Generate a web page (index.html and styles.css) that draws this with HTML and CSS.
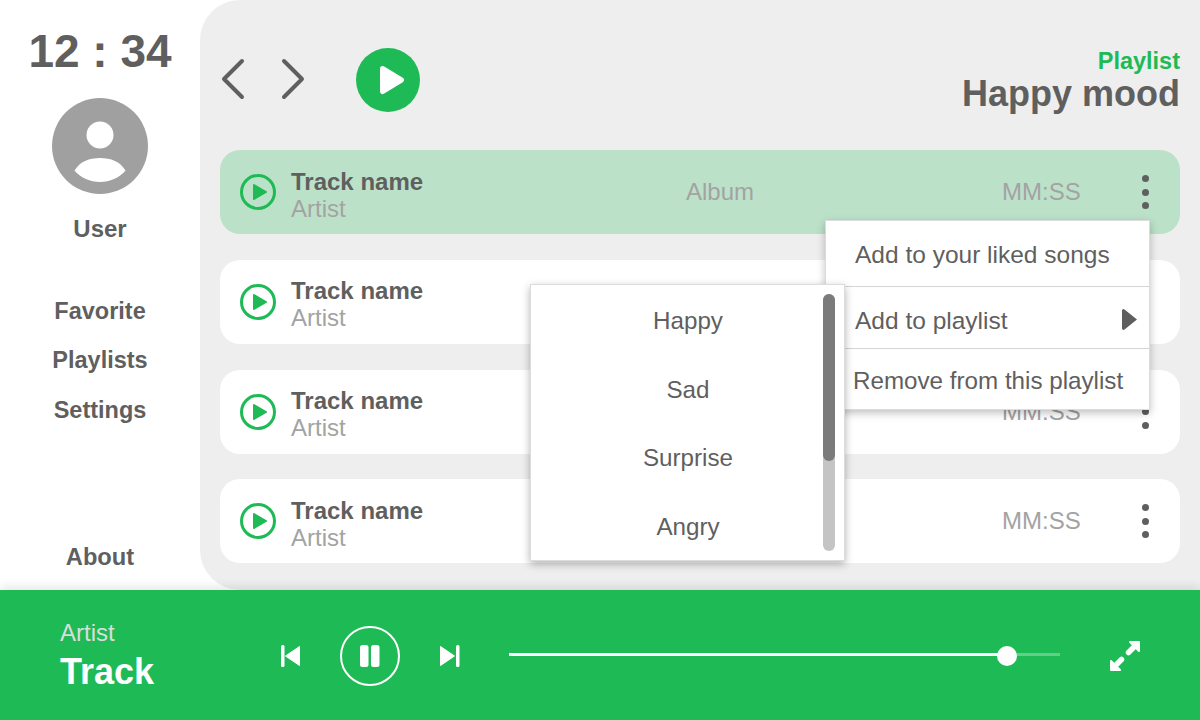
FILE: index.html
```html
<!DOCTYPE html>
<html lang="en">
<head>
  <meta charset="UTF-8">
  <title>Happy mood</title>
  <link rel="stylesheet" href="styles.css">
</head>
<body>
  <div class="top">
    <!-- Sidebar -->
    <nav class="sidebar">
      <div class="clock">12 : 34</div>
      <svg class="avatar" viewBox="0 0 96 96">
        <circle cx="48" cy="48" r="48" fill="#a0a0a0"/>
        <circle cx="48" cy="37" r="13.5" fill="#fff"/>
        <path d="M22.5 72.5C28 63.5 37 60 48 60s20 3.5 25.5 12.5C67 80 58 84 48 84s-19-4-25.5-11.5z" fill="#fff"/>
      </svg>
      <div class="user">User</div>
      <div class="links">
        <a>Favorite</a>
        <a>Playlists</a>
        <a>Settings</a>
      </div>
      <a class="about">About</a>
    </nav>

    <!-- Playlist panel -->
    <main class="panel">
      <header class="head">
        <svg class="arrow" viewBox="0 0 26 42"><path d="M22 3L4 21l18 18" /></svg>
        <svg class="arrow next" viewBox="0 0 26 42"><path d="M4 3l18 18L4 39" /></svg>
        <svg class="play-big" viewBox="0 0 64 64">
          <circle cx="32" cy="32" r="32" fill="#1eba55"/>
          <path d="M26.5 20.5L45.5 32 26.5 43.5z" fill="#fff" stroke="#fff" stroke-width="5" stroke-linejoin="round"/>
        </svg>
        <div class="title">
          <div class="label">Playlist</div>
          <h1>Happy mood</h1>
        </div>
      </header>

      <div class="tracks">
        <div class="track active">
          <svg class="play" viewBox="0 0 36 36"><circle cx="18" cy="18" r="16.5"/><path d="M14 11l12 7-12 7z"/></svg>
          <div class="names"><b>Track name</b><span>Artist</span></div>
          <div class="album">Album</div>
          <div class="time">MM:SS</div>
          <div class="dots"><i></i><i></i><i></i></div>
        </div>
        <div class="track">
          <svg class="play" viewBox="0 0 36 36"><circle cx="18" cy="18" r="16.5"/><path d="M14 11l12 7-12 7z"/></svg>
          <div class="names"><b>Track name</b><span>Artist</span></div>
          <div class="album">Album</div>
          <div class="time">MM:SS</div>
          <div class="dots"><i></i><i></i><i></i></div>
        </div>
        <div class="track">
          <svg class="play" viewBox="0 0 36 36"><circle cx="18" cy="18" r="16.5"/><path d="M14 11l12 7-12 7z"/></svg>
          <div class="names"><b>Track name</b><span>Artist</span></div>
          <div class="album">Album</div>
          <div class="time">MM:SS</div>
          <div class="dots"><i></i><i></i><i></i></div>
        </div>
        <div class="track">
          <svg class="play" viewBox="0 0 36 36"><circle cx="18" cy="18" r="16.5"/><path d="M14 11l12 7-12 7z"/></svg>
          <div class="names"><b>Track name</b><span>Artist</span></div>
          <div class="album">Album</div>
          <div class="time">MM:SS</div>
          <div class="dots"><i></i><i></i><i></i></div>
        </div>
      </div>
    </main>
  </div>

  <!-- Player -->
  <footer class="player">
    <div class="now">
      <span>Artist</span>
      <b>Track</b>
    </div>
    <svg class="skip" viewBox="0 0 20 24"><rect x="1" y="1" width="3.5" height="22" rx="1.5"/><path class="skip-tri" d="M19.5 2.5v19L5.500 12z"/></svg>
    <svg class="pause" viewBox="0 0 60 60">
      <circle cx="30" cy="30" r="29" fill="none" stroke="#fff" stroke-width="2"/>
      <rect x="20" y="19" width="8.5" height="22" rx="2.5" fill="#fff"/>
      <rect x="31" y="19" width="8.5" height="22" rx="2.5" fill="#fff"/>
    </svg>
    <svg class="skip" viewBox="0 0 20 24"><rect x="16" y="1" width="3.5" height="22" rx="1.5"/><path class="skip-tri" d="M.5 2.5v19L14.500 12z"/></svg>
    <div class="progress">
      <div class="knob"></div>
    </div>
    <svg class="expand" viewBox="0 0 30 30">
      <path class="expand-head" d="M20 1h9v9zM10 29H1v-9z"/>
      <path class="expand-shaft" d="M24 6l-5.500 5.500M6 24l5.500-5.500"/>
    </svg>
  </footer>

  <!-- Context menus -->
  <div class="menu">
    <div class="menu-item">Add to your liked songs</div>
    <div class="menu-item sub">Add to playlist<svg class="caret" viewBox="0 0 15 23"><path d="M0 2.5v18a1.5 1.5 0 0 0 2.5 1.100L15 11.5 2.500 1.400A1.500 1.500 0 0 0 0 2.500z"/></svg></div>
    <div class="menu-item last">Remove from this playlist</div>
  </div>
  <div class="picker">
    <div class="moods">
      <div>Happy</div>
      <div>Sad</div>
      <div>Surprise</div>
      <div>Angry</div>
    </div>
    <div class="scroll"><div class="thumb"></div></div>
  </div>
</body>
</html>
```

FILE: styles.css
```css
* { box-sizing: border-box; }
html, body { margin: 0; height: 100%; }
body {
  position: relative;
  display: flex;
  flex-direction: column;
  width: 1200px;
  height: 720px;
  overflow: hidden;
  background: #fff;
  color: #5f5f5f;
  font-family: "Liberation Sans", Arial, sans-serif;
}
.top { display: flex; height: 590px; }

/* sidebar */
.sidebar {
  display: flex;
  flex-direction: column;
  align-items: center;
  width: 200px;
  font-weight: bold;
}
.clock { margin-top: 25px; font-size: 46px; line-height: 53px; }
.avatar { width: 96px; height: 96px; margin-top: 20px; }
.user { margin-top: 21px; font-size: 24px; line-height: 28px; }
.links {
  display: flex;
  flex-direction: column;
  align-items: center;
  gap: 21.3px;
  margin-top: 54px;
  font-size: 23.5px;
  line-height: 28px;
}
.about { margin-top: auto; margin-bottom: 19px; font-size: 23.7px; line-height: 28px; }

/* panel */
.panel {
  flex: 1;
  padding: 0 20px;
  background: #eee;
  border-radius: 40px 0 0 40px;
}
.head { display: flex; align-items: center; height: 150px; padding-top: 10px; }
.arrow { width: 26px; height: 42px; margin-top: -3px; fill: none; stroke: #5f5f5f; stroke-width: 4; stroke-linecap: round; stroke-linejoin: round; }
.arrow.next { margin-left: 34px; }
.play-big { width: 64px; height: 64px; margin-left: 50px; }
.title { margin-left: auto; text-align: right; margin-top: -1px; }
.label { color: #1eba55; font-size: 23.5px; font-weight: bold; line-height: 28px; }
h1 { margin: 0; font-size: 36px; line-height: 38px; }

.tracks { display: flex; flex-direction: column; gap: 25.8px; }
.track {
  display: flex;
  align-items: center;
  height: 84px;
  padding: 0 20px;
  background: #fff;
  border-radius: 20px;
}
.track.active { background: #bce1c9; }
.play { flex: none; width: 36px; height: 36px; fill: none; stroke: #1eba55; stroke-width: 3; }
.play path { fill: #1eba55; stroke: #1eba55; stroke-width: 2; stroke-linejoin: round; }
.names { display: flex; flex-direction: column; width: 395px; margin-left: 15px; padding-top: 5px; line-height: 27px; font-size: 24px; }
.names span, .album, .time { color: #a3a3a3; }
.album { width: 316px; font-size: 24px; }
.time { font-size: 24px; width: 140px; }
.dots { display: flex; flex-direction: column; gap: 6.5px; width: 8px; }
.dots i { width: 7px; height: 7px; background: #5f5f5f; border-radius: 50%; }

/* player */
.player {
  position: relative;
  display: flex;
  align-items: center;
  height: 130px;
  padding-left: 60px;
  background: #1eba55;
  box-shadow: 0 -2px 10px rgba(0, 0, 0, .12);
}
.now { display: flex; flex-direction: column; width: 220px; padding-top: 5px; }
.now span { color: #dcdcdc; font-size: 24px; line-height: 28px; margin: -1px 0 2px; }
.now b { color: #fff; font-size: 36px; line-height: 46px; }
.skip { width: 20px; height: 24px; margin-top: 1px; fill: #fff; }
.skip-tri { stroke: #fff; stroke-width: 1; stroke-linejoin: round; }
.pause { width: 60px; height: 60px; margin: 2px 40px 0; }
.progress {
  position: relative;
  width: 551px;
  height: 3px;
  margin-left: 49px;
  margin-top: -1px;
  background: linear-gradient(to right, #fff 89.8%, rgba(255, 255, 255, .3) 89.8%);
}
.knob {
  position: absolute;
  left: 488px;
  top: -7px;
  width: 20px;
  height: 20px;
  background: #fff;
  border-radius: 50%;
}
.expand { width: 30px; height: 30px; margin-left: 50px; margin-top: 1px; }
.expand-head { fill: #fff; stroke: #fff; stroke-width: 2; stroke-linejoin: round; }
.expand-shaft { fill: none; stroke: #fff; stroke-width: 5.5; stroke-linecap: round; }

/* overlays */
.menu {
  position: absolute;
  left: 825px;
  top: 220px;
  width: 325px;
  height: 190px;
  background: #fff;
  border: 1px solid #dcdcdc;
  box-shadow: 0 3px 8px rgba(0, 0, 0, .25);
  font-size: 24.5px;
}
.menu-item { display: flex; align-items: center; height: 66px; padding: 2px 0 0 29px; border-bottom: 1px solid #d4d4d4; }
.menu-item.sub { height: 62px; padding-top: 6px; padding-right: 12px; justify-content: space-between; }
.menu-item.last { height: 60px; padding-top: 4px; padding-left: 27px; border-bottom: 0; font-size: 24.2px; }
.caret { width: 15px; height: 23px; margin-bottom: 2px; fill: #5f5f5f; }
.picker {
  position: absolute;
  left: 530px;
  top: 284px;
  display: flex;
  width: 315px;
  height: 277px;
  background: #fff;
  border: 1px solid #dcdcdc;
  box-shadow: 0 3px 8px rgba(0, 0, 0, .3);
  font-size: 24.2px;
}
.moods { flex: 1; display: flex; flex-direction: column; gap: 40.5px; padding: 22px 0 0 22px; text-align: center; line-height: 28px; }
.scroll { width: 12px; height: 257px; margin: 9px 9px 0 0; background: #c4c4c4; border-radius: 6px; }
.thumb { height: 167px; background: #7b7b7b; border-radius: 6px; }
```
